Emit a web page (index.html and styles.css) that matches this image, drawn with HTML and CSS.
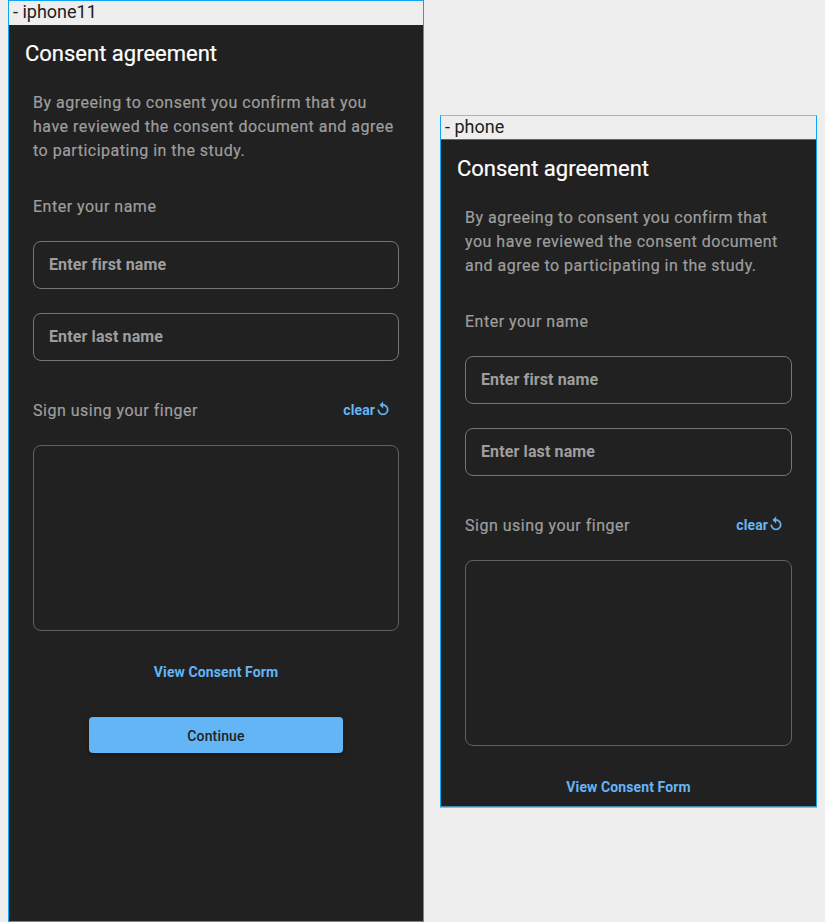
FILE: index.html
```html
<!DOCTYPE html>
<html lang="en">
<head>
<meta charset="utf-8">
<title>Consent agreement</title>
<link rel="stylesheet" href="styles.css">
</head>
<body>
<main class="canvas">
  <section class="device device-large">
    <div class="device-name">- iphone11</div>
    <div class="screen">
      <h1 class="title">Consent agreement</h1>
      <div class="content">
        <p class="copy intro">By agreeing to consent you confirm that you have reviewed the consent document and agree to participating in the study.</p>
        <p class="copy name-label">Enter your name</p>
        <div class="field">Enter first name</div>
        <div class="field">Enter last name</div>
        <div class="sign-row">
          <span class="copy">Sign using your finger</span>
          <a class="link clear">clear<svg class="undo" viewBox="0 0 24 24"><path d="M12 5V1L7 6l5 5V7c3.31 0 6 2.69 6 6s-2.69 6-6 6-6-2.69-6-6H4c0 4.42 3.58 8 8 8s8-3.58 8-8-3.58-8-8-8z"/></svg></a>
        </div>
        <div class="pad"></div>
        <a class="link view">View Consent Form</a>
        <div class="button">Continue</div>
      </div>
    </div>
  </section>
  <section class="device device-small">
    <div class="device-name">- phone</div>
    <div class="screen">
      <h1 class="title">Consent agreement</h1>
      <div class="content">
        <p class="copy intro">By agreeing to consent you confirm that you have reviewed the consent document and agree to participating in the study.</p>
        <p class="copy name-label">Enter your name</p>
        <div class="field">Enter first name</div>
        <div class="field">Enter last name</div>
        <div class="sign-row">
          <span class="copy">Sign using your finger</span>
          <a class="link clear">clear<svg class="undo" viewBox="0 0 24 24"><path d="M12 5V1L7 6l5 5V7c3.31 0 6 2.69 6 6s-2.69 6-6 6-6-2.69-6-6H4c0 4.42 3.58 8 8 8s8-3.58 8-8-3.58-8-8-8z"/></svg></a>
        </div>
        <div class="pad"></div>
        <a class="link view">View Consent Form</a>
      </div>
    </div>
  </section>
</main>
</body>
</html>
```
FILE: styles.css
```css
* { box-sizing: border-box; }
body {
  margin: 0;
  background: #eee;
  font-family: Roboto, "Liberation Sans", sans-serif;
  overflow: hidden;
}
.canvas {
  display: flex;
  align-items: center;
  gap: 16px;
  height: 922px;
  padding-left: 8px;
}
.device {
  display: flex;
  flex-direction: column;
  flex: none;
  border: 1px solid #0ea5f5;
}
.device-large { width: 416px; height: 922px; }
.device-small {
  width: 377px;
  height: 692px;
  border-top-color: #6dc6f7;
  border-bottom-color: #4a86a6;
  box-shadow: 0 1px #6dc6f7;
}
.device-name {
  height: 24px;
  padding-left: 4px;
  font-size: 18px;
  line-height: 22px;
  color: #212121;
}
.device-small .device-name { border-bottom: 1px solid #666; }
.screen {
  flex: 1;
  min-height: 0;
  background: #212121;
  padding: 16px 16px 0;
}
.title {
  margin: 0;
  font-size: 22px;
  font-weight: 400;
  line-height: 25px;
  color: #fff;
  -webkit-text-stroke: 0.2px #fff;
}
.content {
  display: flex;
  flex-direction: column;
  padding: 25px 8px 0;
}
.copy {
  margin: 0;
  font-size: 16px;
  line-height: 24px;
  letter-spacing: 0.5px;
  color: #9e9e9e;
  -webkit-text-stroke: 0.2px #9e9e9e;
}
.name-label { margin: 32px 0 22px; }
.field {
  height: 48px;
  margin-bottom: 24px;
  padding-left: 15px;
  border: 1px solid #757575;
  border-radius: 8px;
  font-size: 16px;
  font-weight: 700;
  line-height: 46px;
  letter-spacing: 0.12px;
  color: #9e9e9e;
}
.sign-row {
  display: flex;
  justify-content: space-between;
  margin: 14px 8px 22px 0;
}
.link {
  color: #64b5f6;
  font-size: 14px;
  font-weight: 700;
  line-height: 24px;
  letter-spacing: 0.1px;
}
.clear { display: flex; margin-top: -1px; margin-bottom: 1px; }
.undo {
  width: 16px;
  height: 16px;
  margin-top: 3px;
  fill: currentColor;
  stroke: currentColor;
  stroke-width: 0.5;
}
.pad {
  height: 186px;
  border: 1px solid #616161;
  border-radius: 8px;
}
.view { margin: 29px 0 33px; text-align: center; }
.button {
  width: 254px;
  height: 36px;
  margin-left: 56px;
  border-radius: 4px;
  background: #64b5f6;
  box-shadow: 0 3px 1px -2px rgba(0,0,0,.2), 0 2px 3px rgba(0,0,0,.14), 0 2px 10px rgba(0,0,0,.2);
  color: #212121;
  font-size: 14px;
  font-weight: 500;
  line-height: 38px;
  letter-spacing: 0.15px;
  text-align: center;
}
```
